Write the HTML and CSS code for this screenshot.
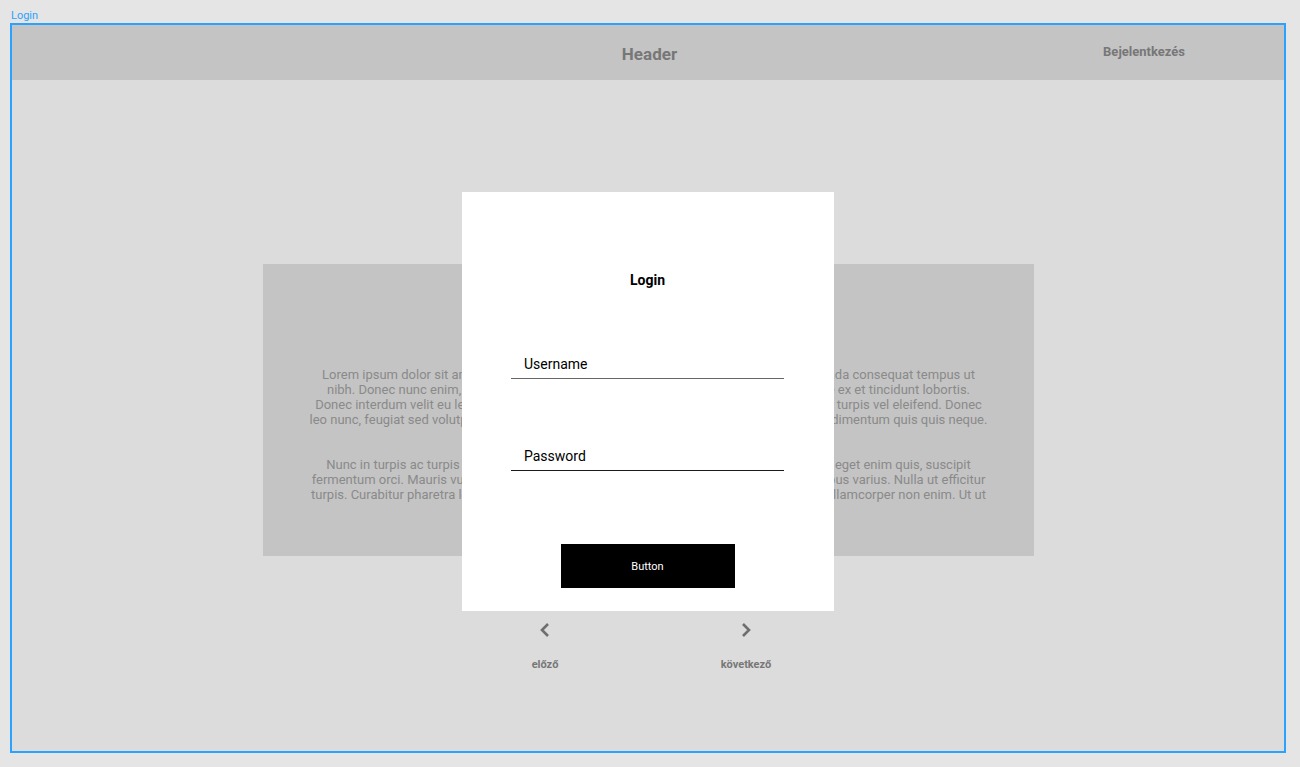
FILE: index.html
```html
<!DOCTYPE html>
<html lang="hu">
<head>
    <meta charset="UTF-8">
    <meta name="viewport" content="width=device-width, initial-scale=1.0">
    <title>Login</title>
    <link rel="stylesheet" href="styles.css">
</head>
<body>
    <div class="frame-label">Login</div>
    <div class="frame">
        <header class="header">
            <span></span>
            <span class="header-title">Header</span>
            <a class="header-link">Bejelentkezés</a>
        </header>

        <main class="main">
            <section class="card">
                <p>Lorem ipsum dolor sit amet, consectetur adipiscing elit. Nam a lorem vitae risus malesuada consequat tempus ut<br>
                nibh. Donec nunc enim, pretium vel lacus at, sagittis dictum mi. Vivamus et lectus neque ex et tincidunt lobortis.<br>
                Donec interdum velit eu lectus vulputate, eget a fermentum tristique. Integer sit amet nulla turpis vel eleifend. Donec<br>
                leo nunc, feugiat sed volutpat in, porta sit amet lacus. Vestibulum ante primis orci. Sed condimentum quis quis neque.</p>
                <p>Nunc in turpis ac turpis porta tristique. Proin finibus, lorem at dictum molestie, mauris a, eget enim quis, suscipit<br>
                fermentum orci. Mauris vulputate lorem sed ante sollicitudin, at tincidunt nisl iaculis, faucibus varius. Nulla ut efficitur<br>
                turpis. Curabitur pharetra lorem id nisi ultrices, ut luctus convallis a. Maecenas dolor arcu ullamcorper non enim. Ut ut</p>
            </section>

            <nav class="pager">
                <div class="pager-item">
                    <svg width="14" height="16" viewBox="0 0 14 16"><path d="M10 2 L4 8 L10 14" fill="none" stroke="#6e6e6e" stroke-width="2.6"/></svg>
                    <span>előző</span>
                </div>
                <div class="pager-item">
                    <svg width="14" height="16" viewBox="0 0 14 16"><path d="M4 2 L10 8 L4 14" fill="none" stroke="#6e6e6e" stroke-width="2.6"/></svg>
                    <span>következő</span>
                </div>
            </nav>

            <form class="modal">
                <h2 class="modal-title">Login</h2>
                <label class="field field-user">Username</label>
                <label class="field field-pass">Password</label>
                <button type="button" class="modal-button">Button</button>
            </form>
        </main>
    </div>
</body>
</html>
```

FILE: styles.css
```css
body {
    margin: 0;
    background-color: #e5e5e5;
    font-family: Roboto, "Liberation Sans", sans-serif;
}

.frame-label {
    height: 23px;
    box-sizing: border-box;
    padding: 9px 0 0 11px;
    font-size: 11px;
    line-height: 13px;
    color: #2aa2ff;
}

.frame {
    margin-left: 10px;
    width: 1276px;
    height: 730px;
    box-sizing: border-box;
    border: 2px solid #2aa2ff;
    background-color: #dcdcdc;
}

.header {
    height: 55px;
    background-color: #c4c4c4;
    display: grid;
    grid-template-columns: 1fr auto 1fr;
    align-items: center;
}

.header-title {
    padding-top: 3px;
    font-size: 17px;
    font-weight: bold;
    color: #777;
    margin-left: 3px;
}

.header-link {
    justify-self: end;
    padding: 0 99px 3px 0;
    font-size: 13px;
    font-weight: bold;
    color: #777;
}

.main {
    position: relative;
    display: flow-root;
}

.card {
    margin: 184px 0 0 251px;
    width: 771px;
    height: 292px;
    box-sizing: border-box;
    padding-top: 103px;
    background-color: #c4c4c4;
    text-align: center;
    font-size: 13px;
    line-height: 15px;
    color: #8a8a8a;
}

.card p {
    margin: 0 0 30px;
    white-space: nowrap;
}

.pager {
    display: flex;
    gap: 141px;
    margin: 66px 0 0 503px;
}

.pager-item {
    width: 60px;
    display: flex;
    flex-direction: column;
    align-items: center;
    gap: 20px;
    font-size: 11px;
    font-weight: bold;
    color: #777;
}

.modal {
    position: absolute;
    left: 450px;
    top: 112px;
    width: 372px;
    height: 419px;
    box-sizing: border-box;
    padding: 80px 50px 0 49px;
    background-color: #fff;
    display: flex;
    flex-direction: column;
}

.modal-title {
    margin: 0 0 68px;
    text-align: center;
    font-size: 14px;
    line-height: 16px;
    font-weight: bold;
    color: #000;
}

.field {
    display: block;
    padding: 0 0 6px 13px;
    font-size: 14px;
    line-height: 16px;
    color: #000;
    border-bottom: 1px solid #666;
}

.field-pass {
    margin-top: 69px;
    border-bottom-color: #1a1a1a;
}

.modal-button {
    margin: 73px auto 0;
    width: 174px;
    height: 44px;
    border: none;
    background-color: #000;
    color: #fff;
    font-family: Roboto, "Liberation Sans", sans-serif;
    font-size: 11px;
}
```
